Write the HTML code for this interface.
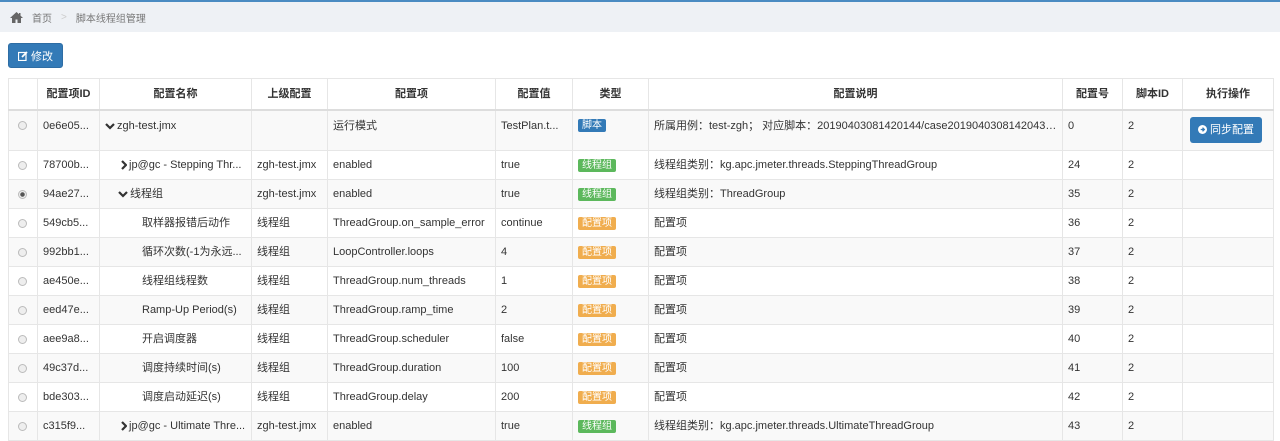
<!DOCTYPE html>
<html><head><meta charset="utf-8"><style>
*{box-sizing:border-box;margin:0;padding:0}
body{width:1280px;height:440px;overflow:hidden;background:#fff;font-family:"Liberation Sans","Noto Sans CJK SC",sans-serif;font-size:11px;color:#333}
.top{height:2px;background:#4a8bc2}
.bc{height:30px;background:#eef1f5;display:flex;align-items:center;padding-left:10px;color:#777;font-size:10px}
.bc .sep{color:#ccc;margin:0 9px}
.btn{position:absolute;left:8px;top:43px;width:55px;height:25px;background:#337ab7;border:1px solid #2e6da4;border-radius:3px;color:#fff;font-size:11px;display:flex;align-items:center;justify-content:center;gap:3px}
table{position:absolute;left:8px;top:78px;width:1265px;border-collapse:collapse;table-layout:fixed}
td,th{border:1px solid #e6e6e6;padding:0 5px;white-space:nowrap;overflow:hidden;text-overflow:ellipsis;height:29px;text-align:left;font-weight:normal;vertical-align:middle;line-height:14px}
th{height:31px;font-weight:bold;text-align:center;border-bottom:2px solid #ddd}
tr.g td{background:#f9f9f9}
tr.r1 td{height:41px;vertical-align:top;padding-top:8px}
tr.r1 td.act{padding-top:6px}
.rad{display:inline-block;width:9px;height:9px;border:1px solid #bbb;border-radius:50%;background:#eee;margin-left:4px;vertical-align:middle}
.rad.on{background:radial-gradient(#555 0 2px,#eee 2.5px)}
.lb{display:inline-block;color:#fff;font-size:10px;padding:0 4px;border-radius:2px;line-height:13px;vertical-align:middle}
.b{background:#337ab7}.gr{background:#5cb85c}.o{background:#f0ad4e}
.sync{display:inline-flex;align-items:center;gap:3px;background:#337ab7;color:#fff;border-radius:3px;padding:0 8px;height:26px;font-size:11px;margin-left:2px}
.ind{padding-left:42px}
.ch{display:inline-block;vertical-align:middle;margin-right:2px}
</style></head><body>
<div class="top"></div>
<div class="bc"><svg width="13" height="11" viewBox="0 0 13 11"><path d="M6.5 0L0 6h2v5h3.5V7.5h2V11H11V6h2L10.5 3.6V1h-1.5v1.2z" fill="#666"/></svg><span style="margin-left:9px">首页</span><span class="sep">&gt;</span><span>脚本线程组管理</span></div>
<div class="btn"><svg width="10" height="10" viewBox="0 0 10 10"><rect x="0.5" y="1.5" width="7.5" height="8" fill="none" stroke="#fff" stroke-width="1.2"/><path d="M4 6L9 1" stroke="#fff" stroke-width="1.8"/></svg>修改</div>
<table>
<colgroup><col style="width:29px"><col style="width:62px"><col style="width:152px"><col style="width:76px"><col style="width:168px"><col style="width:77px"><col style="width:76px"><col style="width:414px"><col style="width:60px"><col style="width:60px"><col style="width:91px"></colgroup>
<tr><th></th><th>配置项ID</th><th>配置名称</th><th>上级配置</th><th>配置项</th><th>配置值</th><th>类型</th><th>配置说明</th><th>配置号</th><th>脚本ID</th><th>执行操作</th></tr>
<tr class="g r1"><td><span class="rad"></span></td><td>0e6e05...</td><td><svg class="ch" width="10" height="8" viewBox="0 0 10 8"><path d="M1 2l4 4 4-4" fill="none" stroke="#333" stroke-width="2.2"/></svg>zgh-test.jmx</td><td></td><td>运行模式</td><td>TestPlan.t...</td><td><span class="lb b">脚本</span></td><td>所属用例：test-zgh； 对应脚本：20190403081420144/case20190403081420439...</td><td>0</td><td>2</td><td class="act"><span class="sync"><svg width="9" height="9" viewBox="0 0 10 10"><circle cx="5" cy="5" r="5" fill="#fff"/><path d="M3 5h4M5 3l2 2-2 2" stroke="#337ab7" stroke-width="1.5" fill="none"/></svg>同步配置</span></td></tr>
<tr><td><span class="rad"></span></td><td>78700b...</td><td style="padding-left:20px"><svg class="ch" width="7" height="10" viewBox="0 0 7 10"><path d="M2 1l4 4-4 4" fill="none" stroke="#333" stroke-width="2.2"/></svg>jp@gc - Stepping Thr...</td><td>zgh-test.jmx</td><td>enabled</td><td>true</td><td><span class="lb gr">线程组</span></td><td>线程组类别：kg.apc.jmeter.threads.SteppingThreadGroup</td><td>24</td><td>2</td><td></td></tr>
<tr class="g"><td><span class="rad on"></span></td><td>94ae27...</td><td style="padding-left:18px"><svg class="ch" width="10" height="8" viewBox="0 0 10 8"><path d="M1 2l4 4 4-4" fill="none" stroke="#333" stroke-width="2.2"/></svg>线程组</td><td>zgh-test.jmx</td><td>enabled</td><td>true</td><td><span class="lb gr">线程组</span></td><td>线程组类别：ThreadGroup</td><td>35</td><td>2</td><td></td></tr>
<tr><td><span class="rad"></span></td><td>549cb5...</td><td class="ind">取样器报错后动作</td><td>线程组</td><td>ThreadGroup.on_sample_error</td><td>continue</td><td><span class="lb o">配置项</span></td><td>配置项</td><td>36</td><td>2</td><td></td></tr>
<tr class="g"><td><span class="rad"></span></td><td>992bb1...</td><td class="ind">循环次数(-1为永远...</td><td>线程组</td><td>LoopController.loops</td><td>4</td><td><span class="lb o">配置项</span></td><td>配置项</td><td>37</td><td>2</td><td></td></tr>
<tr><td><span class="rad"></span></td><td>ae450e...</td><td class="ind">线程组线程数</td><td>线程组</td><td>ThreadGroup.num_threads</td><td>1</td><td><span class="lb o">配置项</span></td><td>配置项</td><td>38</td><td>2</td><td></td></tr>
<tr class="g"><td><span class="rad"></span></td><td>eed47e...</td><td class="ind">Ramp-Up Period(s)</td><td>线程组</td><td>ThreadGroup.ramp_time</td><td>2</td><td><span class="lb o">配置项</span></td><td>配置项</td><td>39</td><td>2</td><td></td></tr>
<tr><td><span class="rad"></span></td><td>aee9a8...</td><td class="ind">开启调度器</td><td>线程组</td><td>ThreadGroup.scheduler</td><td>false</td><td><span class="lb o">配置项</span></td><td>配置项</td><td>40</td><td>2</td><td></td></tr>
<tr class="g"><td><span class="rad"></span></td><td>49c37d...</td><td class="ind">调度持续时间(s)</td><td>线程组</td><td>ThreadGroup.duration</td><td>100</td><td><span class="lb o">配置项</span></td><td>配置项</td><td>41</td><td>2</td><td></td></tr>
<tr><td><span class="rad"></span></td><td>bde303...</td><td class="ind">调度启动延迟(s)</td><td>线程组</td><td>ThreadGroup.delay</td><td>200</td><td><span class="lb o">配置项</span></td><td>配置项</td><td>42</td><td>2</td><td></td></tr>
<tr class="g"><td><span class="rad"></span></td><td>c315f9...</td><td style="padding-left:20px"><svg class="ch" width="7" height="10" viewBox="0 0 7 10"><path d="M2 1l4 4-4 4" fill="none" stroke="#333" stroke-width="2.2"/></svg>jp@gc - Ultimate Thre...</td><td>zgh-test.jmx</td><td>enabled</td><td>true</td><td><span class="lb gr">线程组</span></td><td>线程组类别：kg.apc.jmeter.threads.UltimateThreadGroup</td><td>43</td><td>2</td><td></td></tr>
</table>
</body></html>
